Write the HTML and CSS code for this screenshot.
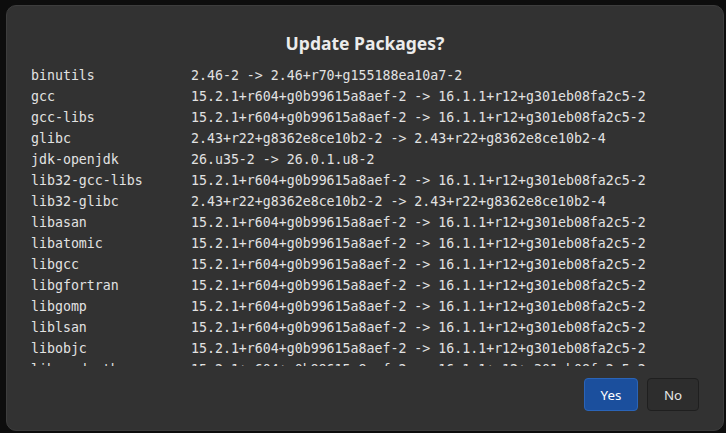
FILE: index.html
```html
<!DOCTYPE html>
<html>
<head>
<meta charset="utf-8">
<link rel="stylesheet" href="styles.css">
</head>
<body>
<div class="dialog">
  <h1 class="title">Update Packages?</h1>
  <div class="list">
    <div class="row"><span class="name">binutils</span><span class="ver">2.46-2 -&gt; 2.46+r70+g155188ea10a7-2</span></div>
    <div class="row"><span class="name">gcc</span><span class="ver">15.2.1+r604+g0b99615a8aef-2 -&gt; 16.1.1+r12+g301eb08fa2c5-2</span></div>
    <div class="row"><span class="name">gcc-libs</span><span class="ver">15.2.1+r604+g0b99615a8aef-2 -&gt; 16.1.1+r12+g301eb08fa2c5-2</span></div>
    <div class="row"><span class="name">glibc</span><span class="ver">2.43+r22+g8362e8ce10b2-2 -&gt; 2.43+r22+g8362e8ce10b2-4</span></div>
    <div class="row"><span class="name">jdk-openjdk</span><span class="ver">26.u35-2 -&gt; 26.0.1.u8-2</span></div>
    <div class="row"><span class="name">lib32-gcc-libs</span><span class="ver">15.2.1+r604+g0b99615a8aef-2 -&gt; 16.1.1+r12+g301eb08fa2c5-2</span></div>
    <div class="row"><span class="name">lib32-glibc</span><span class="ver">2.43+r22+g8362e8ce10b2-2 -&gt; 2.43+r22+g8362e8ce10b2-4</span></div>
    <div class="row"><span class="name">libasan</span><span class="ver">15.2.1+r604+g0b99615a8aef-2 -&gt; 16.1.1+r12+g301eb08fa2c5-2</span></div>
    <div class="row"><span class="name">libatomic</span><span class="ver">15.2.1+r604+g0b99615a8aef-2 -&gt; 16.1.1+r12+g301eb08fa2c5-2</span></div>
    <div class="row"><span class="name">libgcc</span><span class="ver">15.2.1+r604+g0b99615a8aef-2 -&gt; 16.1.1+r12+g301eb08fa2c5-2</span></div>
    <div class="row"><span class="name">libgfortran</span><span class="ver">15.2.1+r604+g0b99615a8aef-2 -&gt; 16.1.1+r12+g301eb08fa2c5-2</span></div>
    <div class="row"><span class="name">libgomp</span><span class="ver">15.2.1+r604+g0b99615a8aef-2 -&gt; 16.1.1+r12+g301eb08fa2c5-2</span></div>
    <div class="row"><span class="name">liblsan</span><span class="ver">15.2.1+r604+g0b99615a8aef-2 -&gt; 16.1.1+r12+g301eb08fa2c5-2</span></div>
    <div class="row"><span class="name">libobjc</span><span class="ver">15.2.1+r604+g0b99615a8aef-2 -&gt; 16.1.1+r12+g301eb08fa2c5-2</span></div>
    <div class="row"><span class="name">libquadmath</span><span class="ver">15.2.1+r604+g0b99615a8aef-2 -&gt; 16.1.1+r12+g301eb08fa2c5-2</span></div>
    <div class="row"><span class="name">libstdc++</span><span class="ver">15.2.1+r604+g0b99615a8aef-2 -&gt; 16.1.1+r12+g301eb08fa2c5-2</span></div>
  </div>
  <div class="actions">
    <button class="btn btn-primary">Yes</button>
    <button class="btn">No</button>
  </div>
</div>
</body>
</html>
```
FILE: styles.css
```css
html, body {
  margin: 0;
  padding: 0;
  height: 100%;
}
body {
  background: #0d0d0d;
  overflow: hidden;
  padding: 5px 2px 0 6px;
  box-sizing: border-box;
}
.dialog {
  box-sizing: border-box;
  height: 426px;
  background: #323232;
  border: 1px solid #3d3d3d;
  border-radius: 10px;
  display: flex;
  flex-direction: column;
  padding: 0 24px 19px 24px;
  color: #e6e6e6;
}
.title {
  margin: 0;
  padding-top: 24px;
  height: 35px;
  box-sizing: content-box;
  text-align: center;
  font-family: "Noto Sans", sans-serif;
  font-weight: 700;
  font-size: 17.5px;
  line-height: 26px;
  color: #ececec;
}
.list {
  height: 301px;
  overflow: hidden;
  font-family: "DejaVu Sans Mono", monospace;
  font-size: 13.25px;
  line-height: 21px;
  color: #e2e2e2;
}
.row {
  display: grid;
  grid-template-columns: 160px 1fr;
  white-space: pre;
}
.actions {
  margin-top: auto;
  display: flex;
  justify-content: flex-end;
  gap: 9px;
}
.btn {
  height: 33px;
  min-width: 52px;
  padding: 0 12px;
  border-radius: 4px;
  border: 1px solid #1f1f1f;
  background: #2d2d2d;
  color: #e6e6e6;
  font-family: "Noto Sans", sans-serif;
  font-size: 13.33px;
}
.btn-primary {
  min-width: 54px;
  background: #1b4f9d;
  border-color: #2a64b8;
  color: #ffffff;
}
```
